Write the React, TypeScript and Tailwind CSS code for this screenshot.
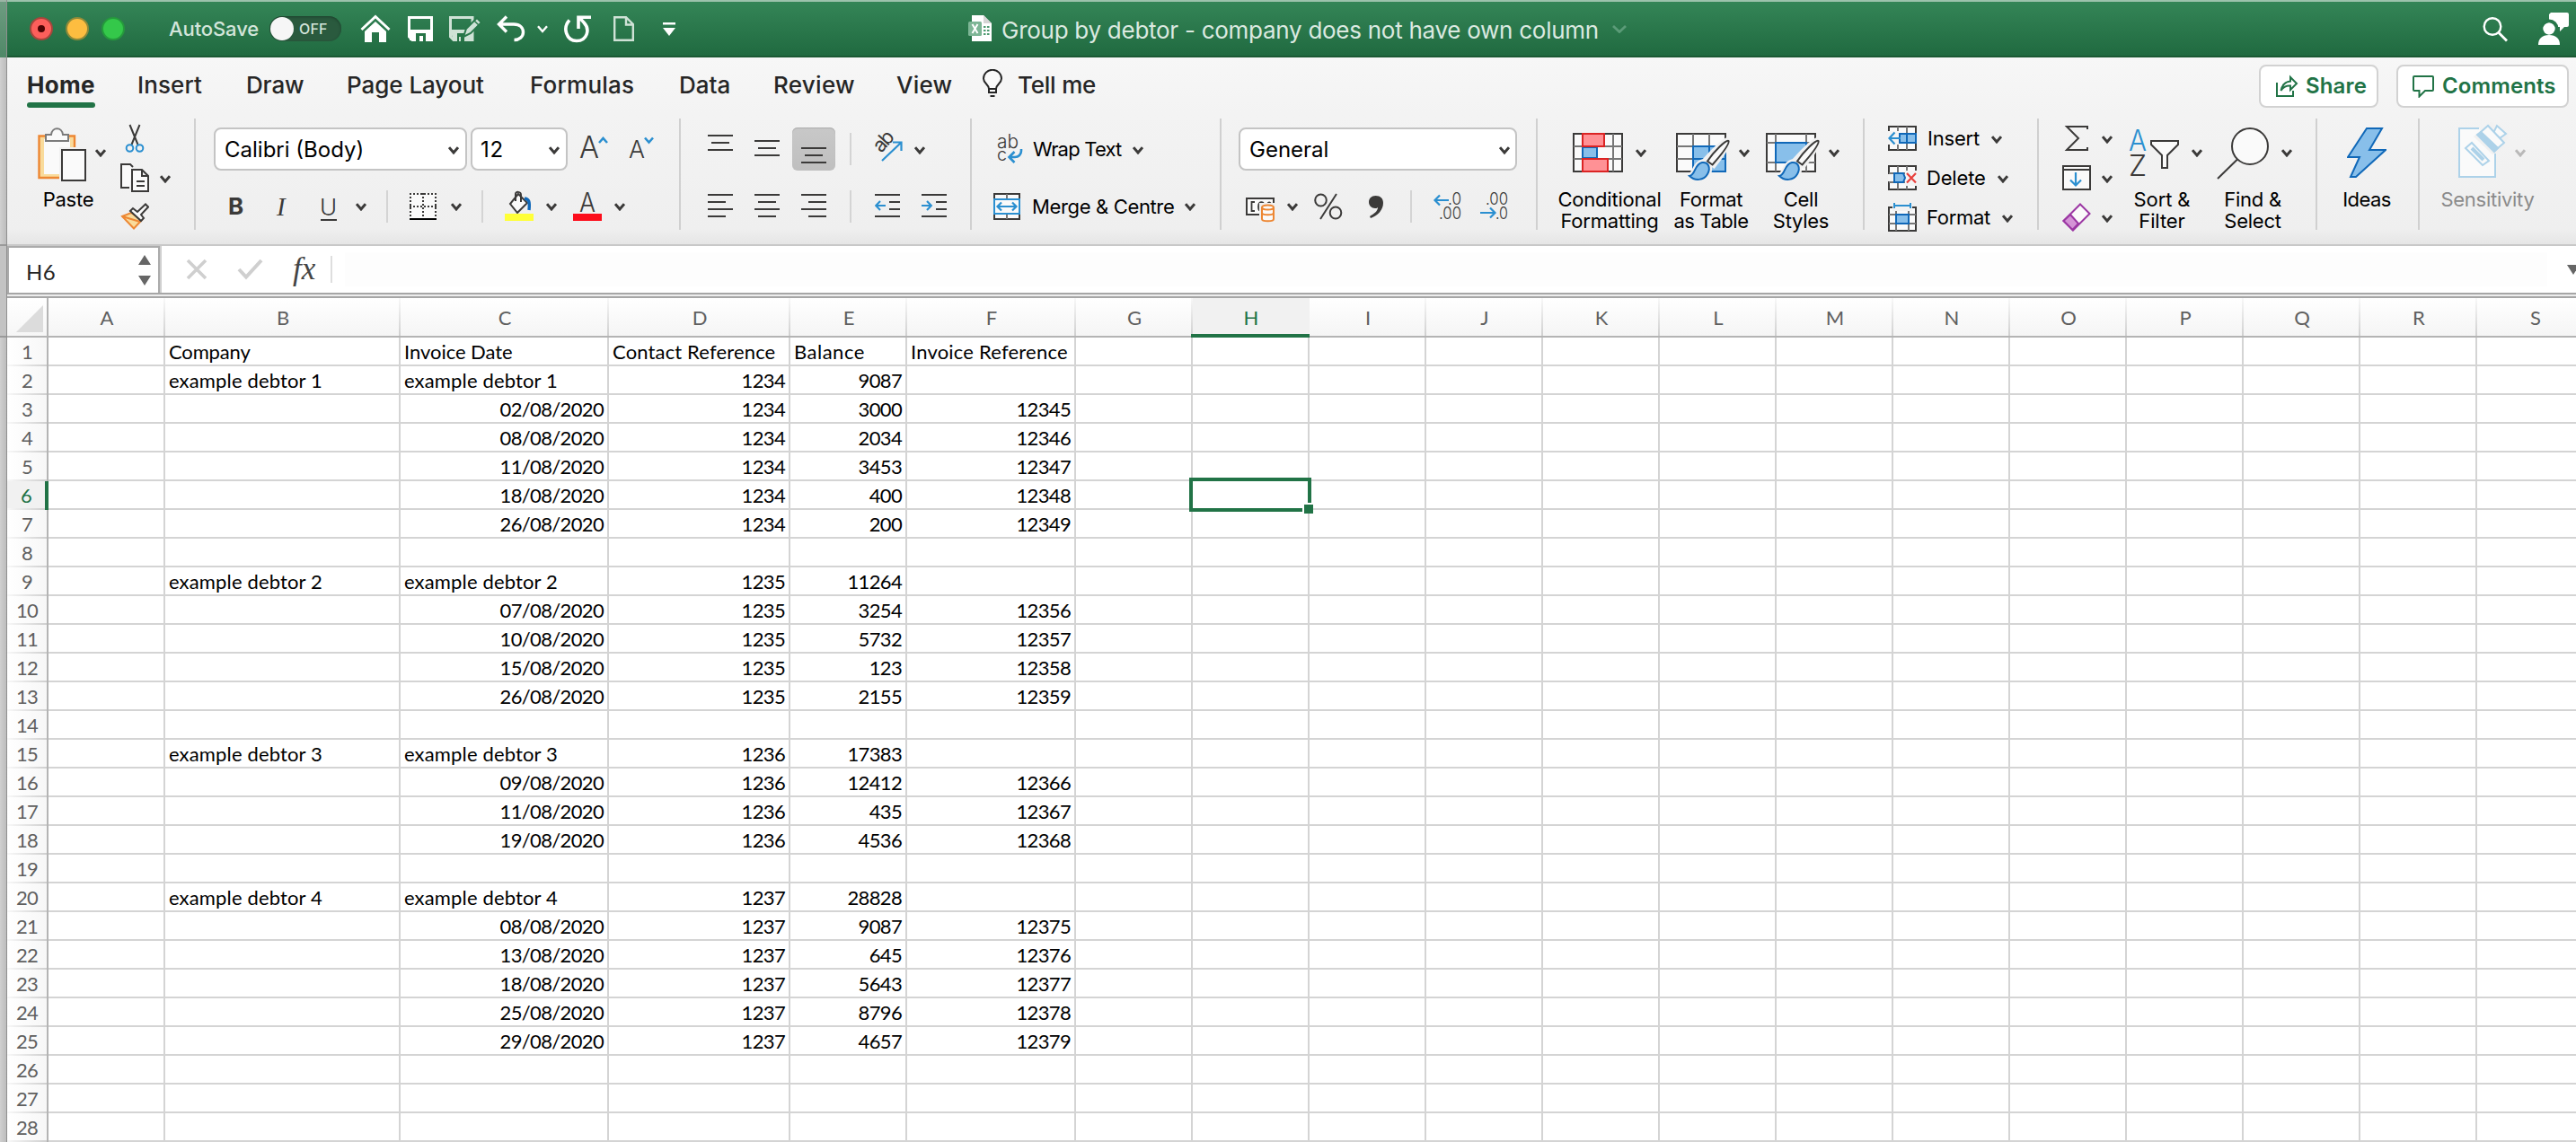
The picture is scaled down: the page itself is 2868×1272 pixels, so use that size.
import React from 'react';

const INK = '#3b3a39';
const BLUE = '#2b8fd0';
const DEEP = '#1068b8';
const SKY = '#88bfea';
const PAPER = '#fafafa';

function Chevron({ className = '' }: { className?: string }) {
  return (
    <svg className={`shrink-0 ${className}`} width="12" height="9" viewBox="0 0 12 9" fill="none" stroke={INK} strokeWidth="3">
      <path d="M1 1.2 6 7 11 1.2" />
    </svg>
  );
}

function Lines({ spec, className = '' }: { spec: [number, number, number][]; className?: string }) {
  return (
    <svg className={`shrink-0 ${className}`} width="28" height="48" viewBox="0 0 28 48" fill={INK}>
      {spec.map(([x, y, w], i) => (
        <rect key={i} x={x} y={y} width={w} height="2" />
      ))}
    </svg>
  );
}

function TitleBar() {
  return (
    <header className="flex h-16 items-center border-b-2 border-t-2 border-b-[#1b5934] border-t-[#9cc2ac] bg-linear-to-b from-[#348557] to-[#206a40] pl-[25px] pr-2 font-[Inter]">
      <div className="flex gap-[14px]">
        <span className="flex size-[26px] items-center justify-center rounded-full border-2 border-[#a5463c] bg-[#fc5f5b]">
          <span className="size-2 rounded-full bg-[#4c0404]" />
        </span>
        <span className="size-[26px] rounded-full border-2 border-[#8f8a3a] bg-[#fdbd40]" />
        <span className="size-[26px] rounded-full border-2 border-[#259a3c] bg-[#34c84a]" />
      </div>
      <span className="ml-[49px] w-[112px] text-[22px] font-medium tracking-[-0.1px] text-[#d3e5da]">AutoSave</span>
      <div className="flex h-7 w-20 items-center rounded-full bg-[#2a5a3e] shadow-[inset_0_1px_3px_#1c3f2b]">
        <span className="ml-px size-[26px] rounded-full bg-[#f6f6f6]" />
        <span className="ml-[6px] text-[16px] font-medium tracking-[0.2px] text-[#d3e5da]">OFF</span>
      </div>
      <svg className="ml-[21px]" width="34" height="32" viewBox="0 0 34 32" fill="#fff">
        <path d="M1.5 17 17 2.5 32.500 17" fill="none" stroke="#fff" strokeWidth="3" />
        <path d="M5 19 17 8 29 19V31H21V20H13V31H5Z" />
      </svg>
      <svg className="ml-[19px]" width="28" height="28" viewBox="0 0 28 28">
        <path d="M1.500 1.500H26.500V26.500H5L1.500 23Z" fill="none" stroke="#fff" strokeWidth="3" />
        <path d="M2 15H26V27H2Z" fill="#fff" />
        <path d="M9 19H20V28H17V22H13V28H9Z" fill="#277547" />
      </svg>
      <svg className="ml-[18px]" width="37" height="30" viewBox="0 0 37 30">
        <path d="M1.500 2.500H26V27.500H5L1.500 24Z" fill="none" stroke="#cfe2d6" strokeWidth="3" />
        <path d="M2 16H27V28H4Z" fill="#cfe2d6" />
        <path d="M9 20H17V29H13V24H11V29H9Z" fill="#277547" />
        <path d="M16 24 19 15 31 3 36 8 24 20Z" fill="#cfe2d6" stroke="#2a784b" strokeWidth="2" />
        <path d="M28 6 33 11" stroke="#2a784b" strokeWidth="1.500" />
      </svg>
      <svg className="ml-[16px]" width="32" height="30" viewBox="0 0 32 30" fill="none" stroke="#fff" strokeWidth="3.400">
        <path d="M11 1.500 2.500 10 11 18.500M3 10H19C26 10 29.500 14 29.500 19S25 27.500 19.500 27.500" />
      </svg>
      <svg className="ml-[13px]" width="12" height="9" viewBox="0 0 12 9" fill="none" stroke="#fff" strokeWidth="2.400">
        <path d="M1 1.200 6 7 11 1.200" />
      </svg>
      <svg className="ml-[17px]" width="32" height="32" viewBox="0 0 32 32" fill="none" stroke="#fff" strokeWidth="3.600">
        <path d="M7 6.500C-1 15 3.500 29.500 15 29.500S30.500 17 23 9C21 7 19.500 5 18 3.500M17 16V3.200H31" />
      </svg>
      <svg className="ml-[24px]" width="23" height="28" viewBox="0 0 23 28" fill="none" stroke="#cfe2d6" strokeWidth="2.400">
        <path d="M1.200 1.200H14L21.800 9V26.800H1.200ZM14 1.200V9.500H21.800" />
      </svg>
      <svg className="ml-[32px]" width="14" height="15" viewBox="0 0 14 15" fill="#fff">
        <path d="M0 0H14V2.500H0ZM0 6H14L7 15Z" />
      </svg>
      <svg className="ml-[326px]" width="27" height="30" viewBox="0 0 27 30">
        <path d="M4 0H17L26 9V29H4Z" fill="#fff" />
        <path d="M17 0V9H26Z" fill="#d6d6d6" />
        <rect x="0" y="7" width="15" height="16" rx="1.500" fill="#7db595" />
        <path d="M4.500 10 10.500 20M10.500 10 4.500 20" stroke="#fff" strokeWidth="2" />
        <path d="M17 12H19.500V14H17ZM21 12H23.500V14H21ZM17 16H19.500V18H17ZM21 16H23.500V18H21ZM17 20H19.500V22H17ZM21 20H23.500V22H21Z" fill="#4d9a70" />
      </svg>
      <h1 className="ml-[10px] w-[680px] whitespace-nowrap pt-[3px] text-[26px] font-normal tracking-[-0.27px] text-[#dbe9e0]">
        Group by debtor - company does not have own column
      </h1>
      <svg width="16" height="9" viewBox="0 0 16 9" fill="none" stroke="#5b9b78" strokeWidth="2.800">
        <path d="M1 1 8 7.500 15 1" />
      </svg>
      <svg className="ml-auto" width="29" height="29" viewBox="0 0 29 29" fill="none" stroke="#fff" strokeWidth="2.400">
        <circle cx="11" cy="11.500" r="9.300" />
        <path d="M18 18.500 27 27.500" strokeWidth="2.800" />
      </svg>
      <svg className="ml-[33px]" width="34" height="38" viewBox="0 0 34 38" fill="#fff">
        <path d="M14 1H32A2 2 0 0 1 34 3V15A2 2 0 0 1 32 17H29L24 22V17H12V3Z" />
        <circle cx="12" cy="19" r="8.500" stroke="#27774a" strokeWidth="4" />
        <circle cx="12" cy="19" r="6.500" />
        <path d="M0 37C0 30 4 26 12 26S24 30 24 37Z" />
      </svg>
    </header>
  );
}

const TABS: [string, string][] = [
  ['Home', 'w-[123px] font-bold tracking-[0.3px]'],
  ['Insert', 'w-[121px] font-medium tracking-[0.1px]'],
  ['Draw', 'w-[112px] font-medium tracking-[-0.16px]'],
  ['Page Layout', 'w-[204px] font-medium tracking-[-0.05px]'],
  ['Formulas', 'w-[166px] font-medium tracking-[0.21px]'],
  ['Data', 'w-[105px] font-medium'],
  ['Review', 'w-[137px] font-medium tracking-[0.28px]'],
  ['View', 'w-[92px] font-medium tracking-[0.2px]'],
];

function TabRow() {
  return (
    <nav className="flex h-16 items-start bg-linear-to-b from-[#f7f7f7] to-[#f3f3f3] pl-[22px] pr-2 pt-[15px] font-[Inter] text-[26px] leading-8 text-[#262626]">
      {TABS.map(([name, cls], i) => (
        <div key={name} className={cls}>
          <div>{name}</div>
          {i === 0 && <div className="mt-[3px] h-[6px] w-[76px] rounded-full bg-[#217346]" />}
        </div>
      ))}
      <svg className="ml-[3px] mt-[-2px]" width="24" height="32" viewBox="0 0 24 32" fill={PAPER} stroke="#262626" strokeWidth="2">
        <path d="M8 22C8 17 2 16 2 10.500A9.800 9.500 0 0 1 22 10.500C22 16 16 17 16 22V26H8Z" />
        <path d="M8 22H16M9.500 30H14.500" />
      </svg>
      <span className="ml-[16px] font-medium tracking-[-0.22px]">Tell me</span>
      <div className="ml-auto mt-[-7px] flex gap-5 text-[24px] font-semibold text-[#217346]">
        <div className="flex h-12 w-[133px] items-center rounded-lg border-2 border-[#d2d2d2] bg-white pl-4">
          <svg width="26" height="26" viewBox="0 0 26 26" fill="none" stroke="#217346" strokeWidth="2">
            <path d="M2 9V24H20V18" />
            <path d="M6.500 18C8 11 11 8 17 7.500V3L24 10 17 17V12.500C12 12 9 14 6.500 18Z" />
          </svg>
          <span className="ml-[8px] tracking-[0.15px]">Share</span>
        </div>
        <div className="flex h-12 w-[192px] items-center rounded-lg border-2 border-[#d2d2d2] bg-white pl-4">
          <svg width="24" height="26" viewBox="0 0 24 26" fill="none" stroke="#217346" strokeWidth="2">
            <path d="M2 2H22A1 1 0 0 1 23 3V17A1 1 0 0 1 22 18H14L7.500 24.500V18H2A1 1 0 0 1 1 17V3A1 1 0 0 1 2 2Z" />
          </svg>
          <span className="ml-[9px] tracking-[0.09px]">Comments</span>
        </div>
      </div>
    </nav>
  );
}

function Divider() {
  return <div className="h-[124px] w-[2px] shrink-0 bg-[#d0d0d0]" />;
}

function ShortDivider({ className = '' }: { className?: string }) {
  return <div className={`h-9 w-[2px] shrink-0 bg-[#d4d4d4] ${className}`} />;
}

function BigButton({ lines, className, labelClass = '', children }: { lines: string[]; className: string; labelClass?: string; children: React.ReactNode }) {
  return (
    <div className={`flex shrink-0 flex-col items-center pt-[10px] ${className}`}>
      <div className="flex h-[60px]">{children}</div>
      <div className={`mt-2 whitespace-nowrap text-center text-[22px] leading-6 ${labelClass}`}>
        {lines.map((l) => (
          <div key={l}>{l}</div>
        ))}
      </div>
    </div>
  );
}

function PaintBrush() {
  return (
    <g>
      <path d="M58 14C59 18 49 33 42 42L33 36C42 26 54 14 58 14Z" fill="#f1f1f1" stroke="#f1f1f1" strokeWidth="6" />
      <path d="M14 54C20 54 20 40 29 38 36 37 40 45 36 52 31 60 20 60 14 54Z" fill="#f1f1f1" stroke="#f1f1f1" strokeWidth="5" />
      <path d="M58.500 15C60 19 48 33 40.500 41.500L35 37.500C42 27 56 13 58.500 15Z" fill={PAPER} stroke={INK} strokeWidth="2" />
      <path d="M15 54C22 53 20 41 29 39 36 38 39 45 35 52 31 59 21 60 15 54Z" fill={SKY} stroke={DEEP} strokeWidth="2" />
    </g>
  );
}

function ClipboardGroup() {
  return (
    <div className="flex w-[208px] shrink-0">
      <BigButton lines={['Paste']} className="ml-[34px] w-[76px]" labelClass="pr-2 tracking-[-0.25px]">
        <svg width="55" height="60" viewBox="0 0 55 60">
          <path d="M1.500 9.500H41V56H1.500Z" fill="#f9db9b" stroke="#ed8733" strokeWidth="2.400" />
          <path d="M7 13H36V52H7Z" fill={PAPER} />
          <path d="M24 22H55V60H24Z" fill="#f1f1f1" />
          <path d="M9 8H15C16 -1 27 -1 28 8H34V15H9Z" fill={PAPER} stroke="#7b7b7b" strokeWidth="2" />
          <path d="M27 25H53V59H27Z" fill={PAPER} stroke={INK} strokeWidth="2" />
        </svg>
        <Chevron className="ml-[9px] mt-6" />
      </BigButton>
      <div className="ml-4 flex flex-col">
        <svg className="mt-[6px]" width="32" height="32" viewBox="0 0 32 32" fill="none" strokeWidth="2">
          <path d="M10.500 1 19.500 23M21.500 1 12.500 23" stroke={INK} />
          <circle cx="10.500" cy="27" r="3.800" stroke={BLUE} />
          <circle cx="21.500" cy="27" r="3.800" stroke={BLUE} />
        </svg>
        <div className="mt-3 flex items-start">
          <svg width="32" height="32" viewBox="0 0 32 32" fill={PAPER} stroke={INK} strokeWidth="2">
            <path d="M14 4 11 1H1V27H10" />
            <path d="M13 7H24L31 14V31H13ZM24 7V14H31M18 20H27M18 25H27" />
          </svg>
          <Chevron className="ml-3 mt-[13px]" />
        </div>
        <svg className="mt-3" width="32" height="30" viewBox="0 0 32 30" strokeWidth="2">
          <path d="M2 15 12 11 24 19 15 28.500Z" fill="#f9db9b" stroke="#ed8733" />
          <path d="M2 15 22 21" stroke="#ed8733" />
          <path d="M11 9 14 6 19 10 28 1.500 31 4.500 23 13 26 17 23 20Z" fill={PAPER} stroke={INK} />
        </svg>
      </div>
    </div>
  );
}

function SelectBox({ text, className }: { text: string; className: string }) {
  return (
    <div className={`flex h-12 shrink-0 items-center justify-between rounded-lg border-2 border-[#c4c4c4] bg-white text-[24px] ${className}`}>
      <span className="pt-[2px]">{text}</span>
      <Chevron className="mt-[2px]" />
    </div>
  );
}

function FontGroup() {
  return (
    <div className="flex w-[538px] shrink-0 flex-col gap-4 pt-[10px]">
      <div className="flex h-12 items-center pl-5">
        <SelectBox text="Calibri (Body)" className="w-[282px] pl-[10px] pr-[7px]" />
        <SelectBox text="12" className="ml-1 w-[108px] pl-[9px] pr-[7px] tracking-[0.8px]" />
        <svg className="ml-[12px] overflow-visible" width="34" height="48" viewBox="0 0 34 48">
          <text x="1" y="34" fontFamily="Inter" fontWeight="300" fontSize="34" textLength="22" lengthAdjust="spacingAndGlyphs" fill={INK}>A</text>
          <path d="M23 17 27.500 12 32 17" fill="none" stroke={BLUE} strokeWidth="2.600" />
        </svg>
        <svg className="ml-[21px] overflow-visible" width="34" height="48" viewBox="0 0 34 48">
          <text x="1" y="34" fontFamily="Inter" fontWeight="300" fontSize="27" textLength="18" lengthAdjust="spacingAndGlyphs" fill={INK}>A</text>
          <path d="M19 11.500 23.500 16.500 28 11.500" fill="none" stroke={BLUE} strokeWidth="2.600" />
        </svg>
      </div>
      <div className="flex h-12 items-center text-[26px] leading-8 text-[#3b3a39]">
        <span className="ml-[36px] w-[54px] font-bold">B</span>
        <span className="w-[48px] font-['Liberation_Serif'] text-[29px] italic">I</span>
        <span className="flex flex-col items-center font-light">
          <span className="h-[29px]">U</span>
          <span className="h-[2px] w-[18px] bg-[#3b3a39]" />
        </span>
        <Chevron className="ml-[21px]" />
        <ShortDivider className="ml-[22px]" />
        <svg className="ml-6" width="30" height="30" viewBox="0 0 30 30" stroke={INK} strokeWidth="2">
          <rect x="0" y="0" width="30" height="30" fill={PAPER} stroke="none" />
          <path d="M0 1H30M0 15H30M1 0V28M15 0V28M29 0V28" strokeDasharray="2 2" />
          <path d="M0 29H30" stroke="#000" />
        </svg>
        <Chevron className="ml-4" />
        <ShortDivider className="ml-[22px]" />
        <svg className="ml-6" width="32" height="48" viewBox="0 0 32 48">
          <path d="M15 10 6 21 14 31 25 20Z" fill={PAPER} stroke={INK} strokeWidth="2" />
          <path d="M12 18V10C12 7 18 7 18 11V19" fill="none" stroke={INK} strokeWidth="2" />
          <path d="M22 15C27 16 28 18 27 28" fill="none" stroke={DEEP} strokeWidth="3.400" />
          <rect x="0" y="32" width="32" height="8" fill="#ffff38" />
        </svg>
        <Chevron className="ml-[14px]" />
        <svg className="ml-[18px] overflow-visible" width="32" height="48" viewBox="0 0 32 48">
          <text x="7" y="30" fontFamily="Inter" fontWeight="300" fontSize="30" textLength="18" lengthAdjust="spacingAndGlyphs" fill={INK}>A</text>
          <rect x="0" y="32" width="32" height="8" fill="#fc0d1b" />
        </svg>
        <Chevron className="ml-[14px]" />
      </div>
    </div>
  );
}

function AlignGroup() {
  return (
    <div className="flex w-[322px] shrink-0 flex-col gap-4 pt-[10px]">
      <div className="flex h-12 items-center">
        <Lines className="ml-[30px]" spec={[[0, 8, 28], [4, 16, 20], [0, 24, 28]]} />
        <Lines className="ml-6" spec={[[0, 14, 28], [4, 22, 20], [0, 30, 28]]} />
        <div className="ml-[14px] flex h-12 w-12 items-center justify-center rounded-md bg-linear-to-b from-[#c8c8c8] to-[#bfbfbf] shadow-[inset_0_1px_1px_#ababab]">
          <Lines spec={[[0, 22, 28], [4, 30, 20], [0, 38, 28]]} />
        </div>
        <ShortDivider className="ml-4" />
        <svg className="ml-[22px] overflow-visible" width="36" height="48" viewBox="0 0 36 48">
          <text x="0" y="0" transform="translate(11 29) rotate(-48)" fontFamily="Inter" fontSize="22" textLength="24" fill={INK}>ab</text>
          <path d="M12 37 33 17M24 16.500H33.500V26" fill="none" stroke={BLUE} strokeWidth="2.200" />
        </svg>
        <Chevron className="ml-[12px] mt-[2px]" />
      </div>
      <div className="flex h-12 items-center">
        <Lines className="ml-[30px]" spec={[[0, 10, 28], [0, 18, 20], [0, 26, 28], [0, 34, 20]]} />
        <Lines className="ml-6" spec={[[0, 10, 28], [4, 18, 20], [0, 26, 28], [4, 34, 20]]} />
        <Lines className="ml-6" spec={[[0, 10, 28], [8, 18, 20], [0, 26, 28], [8, 34, 20]]} />
        <ShortDivider className="ml-[26px]" />
        <svg className="ml-[26px]" width="28" height="48" viewBox="0 0 28 48">
          <path d="M0 11H28M16 19H28M16 27H28M0 35H28" stroke={INK} strokeWidth="2" />
          <path d="M12 23H1.500M6 18 1.200 23 6 28" fill="none" stroke={BLUE} strokeWidth="2.200" />
        </svg>
        <svg className="ml-6" width="28" height="48" viewBox="0 0 28 48">
          <path d="M0 11H28M16 19H28M16 27H28M0 35H28" stroke={INK} strokeWidth="2" />
          <path d="M0 23H10.500M6 18 10.800 23 6 28" fill="none" stroke={BLUE} strokeWidth="2.200" />
        </svg>
      </div>
    </div>
  );
}

function WrapGroup() {
  return (
    <div className="flex w-[276px] shrink-0 flex-col gap-4 whitespace-nowrap pt-[10px] text-[22px]">
      <div className="flex h-12 items-center pl-6">
        <svg className="overflow-visible" width="34" height="48" viewBox="0 0 34 48">
          <text x="4" y="23" fontFamily="Inter" fontWeight="300" fontSize="21" textLength="24" lengthAdjust="spacingAndGlyphs" fill={INK}>ab</text>
          <text x="4" y="37" fontFamily="Inter" fontWeight="300" fontSize="20" textLength="11" lengthAdjust="spacingAndGlyphs" fill={INK}>c</text>
          <path d="M31 24V26C31 30 28 33 24 33H18M23.500 27 17.500 33 23.500 39" fill="none" stroke={BLUE} strokeWidth="2.600" />
        </svg>
        <span className="ml-[10px] w-[102px] tracking-[-0.8px]">Wrap Text</span>
        <Chevron className="ml-[9px] mt-[2px]" />
      </div>
      <div className="flex h-12 items-center pl-6">
        <svg width="30" height="30" viewBox="0 0 30 30" strokeWidth="2">
          <path d="M1 1H29V29H1Z" fill={PAPER} stroke={INK} />
          <path d="M15 1V29" stroke="#777" />
          <path d="M1 7H29V23H1Z" fill={PAPER} stroke={BLUE} />
          <path d="M5 15H25M9 10.500 4.500 15 9 19.500M21 10.500 25.500 15 21 19.500" fill="none" stroke={BLUE} strokeWidth="2.200" />
        </svg>
        <span className="ml-[13px] tracking-[-0.35px]">Merge &amp; Centre</span>
        <Chevron className="ml-[12px]" />
      </div>
    </div>
  );
}

function NumberGroup() {
  return (
    <div className="flex w-[350px] shrink-0 flex-col gap-4 pt-[10px]">
      <div className="flex h-12 items-center pl-[19px]">
        <SelectBox text="General" className="w-[310px] pl-[10px] pr-[6px]" />
      </div>
      <div className="flex h-12 items-center pl-[26px]">
        <svg width="34" height="48" viewBox="0 0 34 48">
          <path d="M2 15H32V33H2Z" fill={PAPER} stroke={INK} strokeWidth="2" />
          <path d="M11 19H7.500V29H11M21 20C17 18 15 20 15 24S16 29 18 29M25 21C27 18 29 20 29 22" fill="none" stroke={INK} strokeWidth="1.800" />
          <path d="M16 20H34V42H16Z" fill="#f0f0f0" />
          <path d="M19 25V38C19 41 32 41 32 38V25" fill={PAPER} stroke="#ed8733" strokeWidth="2" />
          <path d="M19 31C19 34 32 34 32 31" fill="none" stroke="#ed8733" strokeWidth="2" />
          <ellipse cx="25.500" cy="25" rx="6.500" ry="2.600" fill={PAPER} stroke="#ed8733" strokeWidth="2" />
        </svg>
        <Chevron className="ml-[13px]" />
        <svg className="ml-[18px]" width="32" height="48" viewBox="0 0 32 48" fill="none" stroke={INK} strokeWidth="2">
          <ellipse cx="7.500" cy="17" rx="6.300" ry="6.500" />
          <ellipse cx="24" cy="31" rx="6.300" ry="6.500" />
          <path d="M25 10 7 38" />
        </svg>
        <svg className="ml-[29px]" width="16" height="48" viewBox="0 0 16 48" fill={INK}>
          <path d="M7.500 12C13 12 16 15 16 20 16 28 10 34 2 37L1 35C6 32 10 29 10 25 9 26 8 26 7 26 3 26 0 23 0 19S3 12 7.500 12Z" />
        </svg>
        <ShortDivider className="ml-[30px]" />
        <svg className="ml-6 overflow-visible" width="32" height="48" viewBox="0 0 32 48" fontFamily="Inter" fontWeight="300" fontSize="19" fill={INK}>
          <text x="16" y="22" textLength="15" lengthAdjust="spacingAndGlyphs">.0</text>
          <text x="6" y="38" textLength="25" lengthAdjust="spacingAndGlyphs">.00</text>
          <path d="M17 17H1.500M7 11.500 1.500 17 7 22.500" fill="none" stroke={BLUE} strokeWidth="2.200" />
        </svg>
        <svg className="ml-5 overflow-visible" width="32" height="48" viewBox="0 0 32 48" fontFamily="Inter" fontWeight="300" fontSize="19" fill={INK}>
          <text x="6" y="22" textLength="25" lengthAdjust="spacingAndGlyphs">.00</text>
          <text x="17" y="38" textLength="14" lengthAdjust="spacingAndGlyphs">.0</text>
          <path d="M0 31H16.500M11 25.500 16.500 31 11 36.500" fill="none" stroke={BLUE} strokeWidth="2.200" />
        </svg>
      </div>
    </div>
  );
}

function StylesGroup() {
  return (
    <div className="flex w-[362px] shrink-0">
      <BigButton lines={['Conditional', 'Formatting']} className="ml-[23px] w-[114px]" labelClass="tracking-[-0.2px]">
        <svg width="56" height="60" viewBox="0 0 56 60" strokeWidth="2">
          <path d="M1 7H55V49H1Z" fill={PAPER} stroke={INK} />
          <path d="M11 7V49M45 7V49M1 21H55M1 35H55" stroke="#777" />
          <path d="M11 22H27V34H11Z" fill={SKY} stroke={DEEP} />
          <path d="M28 22H36V34H28Z" fill={PAPER} stroke="none" />
          <path d="M11 7H35V21H11ZM11 35H39V49H11Z" fill="#ff9195" stroke="#db2424" />
        </svg>
        <Chevron className="ml-[14px] mt-6" />
      </BigButton>
      <BigButton lines={['Format', 'as Table']} className="ml-[17px] w-[82px]" labelClass="pr-1 tracking-[-0.45px]">
        <svg width="60" height="60" viewBox="0 0 60 60" strokeWidth="2">
          <path d="M1 7H55V49H1Z" fill={PAPER} stroke={INK} />
          <path d="M19 7V49M37 7V21M1 21H55M1 35H19" stroke="#777" />
          <path d="M19 21H55V49H19Z" fill={SKY} stroke={DEEP} />
          <path d="M37 21V49M19 35H55" stroke={DEEP} />
          <PaintBrush />
        </svg>
        <Chevron className="ml-[10px] mt-6" />
      </BigButton>
      <BigButton lines={['Cell', 'Styles']} className="ml-[18px] w-[82px]" labelClass="pr-1 tracking-[-0.27px]">
        <svg width="60" height="60" viewBox="0 0 60 60" strokeWidth="2">
          <path d="M1 7H55V49H1Z" fill={PAPER} stroke={INK} />
          <path d="M11 7V49M45 7V49M1 17H55M1 39H55" stroke="#777" />
          <path d="M11 17H45V39H11Z" fill={SKY} stroke={DEEP} />
          <PaintBrush />
        </svg>
        <Chevron className="ml-[10px] mt-6" />
      </BigButton>
    </div>
  );
}

function CellsGroup() {
  return (
    <div className="flex w-[192px] shrink-0 flex-col pl-[26px] text-[22px]">
      <div className="flex h-11 items-center">
        <svg width="32" height="28" viewBox="0 0 32 28" strokeWidth="2">
          <path d="M1 1H31V27H1Z" fill={PAPER} stroke={INK} />
          <path d="M11 1V27M21 1V27M1 9H31M1 19H31" stroke="#777" />
          <path d="M0 6H12V21H0Z" fill="#f4f4f4" />
          <path d="M13 9H31V19H13ZM21 9V19" fill={SKY} stroke={DEEP} />
          <path d="M14 14H1.500M7.500 7.500 1.500 14 7.500 20.500" fill="none" stroke={BLUE} strokeWidth="2.200" />
        </svg>
        <span className="ml-3 tracking-[-0.19px]">Insert</span>
        <Chevron className="ml-[13px] mt-[2px]" />
      </div>
      <div className="flex h-11 items-center">
        <svg width="32" height="28" viewBox="0 0 32 28" strokeWidth="2">
          <path d="M1 1H31V27H1Z" fill={PAPER} stroke={INK} />
          <path d="M11 1V27M21 1V27M1 9H31M1 19H31" stroke="#777" />
          <path d="M0 10H5V18H0ZM19 6H32V23H19Z" fill="#f4f4f4" />
          <path d="M7 9H17L19 14 17 19H7Z" fill={SKY} stroke={DEEP} />
          <path d="M21 9 31 19.500M31 9 21 19.500" stroke="#e8403c" strokeWidth="2.200" />
        </svg>
        <span className="ml-[11px] tracking-[-0.17px]">Delete</span>
        <Chevron className="ml-[13px] mt-[2px]" />
      </div>
      <div className="flex h-11 items-center">
        <svg width="32" height="32" viewBox="0 0 32 32" strokeWidth="2">
          <path d="M1 5H31V31H1Z" fill={PAPER} stroke={INK} />
          <path d="M9 8V31M23 8V31M1 13H31M1 23H31" stroke="#777" />
          <path d="M5 0H27V9H5Z" fill="#f2f2f2" />
          <path d="M9 13H23V23H9Z" fill={SKY} stroke={DEEP} />
          <path d="M7 3H25M7 0V6M25 0V6" stroke={BLUE} />
        </svg>
        <span className="ml-[11px] tracking-[-0.31px]">Format</span>
        <Chevron className="ml-[13px] mt-[2px]" />
      </div>
    </div>
  );
}

function EditingGroup() {
  return (
    <div className="flex w-[308px] shrink-0">
      <div className="ml-[26px] flex w-14 flex-col">
        <div className="flex h-11 items-center">
          <svg width="32" height="28" viewBox="0 0 32 28" fill="none" stroke={INK} strokeWidth="2">
            <path d="M28 4V1H5L18 14 5 27H28V24" />
          </svg>
          <Chevron className="ml-3 mt-[2px]" />
        </div>
        <div className="flex h-11 items-center">
          <svg width="32" height="28" viewBox="0 0 32 28" fill={PAPER} stroke={INK} strokeWidth="2">
            <path d="M1 1H31V27H1ZM1 5H31" />
            <path d="M15 8V22M9 16.500 15 22.500 21 16.500" fill="none" stroke={BLUE} strokeWidth="2.200" />
          </svg>
          <Chevron className="ml-3 mt-[2px]" />
        </div>
        <div className="flex h-11 items-center">
          <svg width="32" height="32" viewBox="0 0 32 32" strokeWidth="2" stroke="#9b36a3">
            <path d="M20 1.500 30.500 12 12 30.500 1.500 20Z" fill={PAPER} />
            <path d="M9 13 18 23 11.500 30 1.500 20Z" fill="#d493d6" />
          </svg>
          <Chevron className="ml-3 mt-[2px]" />
        </div>
      </div>
      <BigButton lines={['Sort &', 'Filter']} className="ml-[18px] w-[82px]" labelClass="pr-2 tracking-[-0.1px]">
        <svg className="overflow-visible" width="58" height="60" viewBox="0 0 58 60" fontFamily="Inter" fontWeight="300">
          <text x="0" y="26" fontSize="33" textLength="20" lengthAdjust="spacingAndGlyphs" fill={BLUE}>A</text>
          <text x="0" y="54" fontSize="33" textLength="20" lengthAdjust="spacingAndGlyphs" fill={INK}>Z</text>
          <path d="M25 15H55V19L43 31V45H37V31L25 19Z" fill={PAPER} stroke={INK} strokeWidth="2" />
        </svg>
        <Chevron className="ml-[12px] mt-6" />
      </BigButton>
      <BigButton lines={['Find &', 'Select']} className="ml-[16px] w-[84px]" labelClass="pr-1 tracking-[-0.24px]">
        <svg width="60" height="60" viewBox="0 0 60 60" fill={PAPER} stroke={INK} strokeWidth="2">
          <circle cx="37" cy="21" r="20" />
          <path d="M23 35.500 1 57" />
        </svg>
        <Chevron className="ml-[12px] mt-6" />
      </BigButton>
    </div>
  );
}

function Ribbon() {
  return (
    <div className="flex h-[146px] border-b-2 border-[#c8c8c8] bg-linear-to-b from-[#f3f3f3] via-[#efefef] via-88% to-[#e6e6e6] pt-1 font-[Inter] text-black">
      <ClipboardGroup />
      <Divider />
      <FontGroup />
      <Divider />
      <AlignGroup />
      <Divider />
      <WrapGroup />
      <Divider />
      <NumberGroup />
      <Divider />
      <StylesGroup />
      <Divider />
      <CellsGroup />
      <Divider />
      <EditingGroup />
      <Divider />
      <div className="flex w-[112px] shrink-0 justify-center pr-[2px]">
        <BigButton lines={['Ideas']} className="w-[60px]" labelClass="tracking-[-0.6px]">
          <svg width="44" height="60" viewBox="0 0 44 60" fill={SKY} stroke={DEEP} strokeWidth="2">
            <path d="M22 1H39L25 25H43L10 55H4L14 33H1Z" />
          </svg>
        </BigButton>
      </div>
      <Divider />
      <BigButton lines={['Sensitivity']} className="ml-[24px] w-[112px]" labelClass="pr-[9px] text-[#8b8b8b] tracking-[-0.27px]">
        <svg className="overflow-visible" width="54" height="60" viewBox="0 0 54 60" fill={PAPER} stroke="#add2e9" strokeWidth="2">
          <path d="M23 1H1V55H41V29" />
          <path d="M17 10 37 -6 56 8 48 26 38 30Z" fill="#f1f1f1" stroke="none" />
          <path d="M39 6 43 -2 53 7 46 12Z" />
          <path d="M25 5 33 -2 51 17 44 23Z" />
          <path d="M21 8 25 5 44 23 40 27Z" fill="#add2e9" />
          <path d="M15 17 34 37 27 42 8 23Z" />
          <path d="M15 23 28 36" strokeWidth="4" />
        </svg>
        <Chevron className="ml-[9px] mt-6 opacity-30" />
      </BigButton>
    </div>
  );
}

function FormulaBar() {
  return (
    <div className="flex h-[58px] flex-col bg-white">
      <div className="flex h-[52px]">
        <div className="flex w-[170px] shrink-0 items-center border-2 border-b-0 border-[#ababab] pl-[19px]">
          <span className="w-[125px] pt-[3px] font-[Lato] text-[24px] tracking-[0.5px] text-[#262626]">H6</span>
          <svg width="14" height="34" viewBox="0 0 14 34" fill="#666">
            <path d="M0 11H14L7 0ZM0 23H14L7 34Z" />
          </svg>
        </div>
        <div className="flex w-full items-center border-l-2 border-[#d0d0d0]">
          <svg className="ml-[27px]" width="24" height="24" viewBox="0 0 24 24" stroke="#cfcfcf" strokeWidth="3.600">
            <path d="M2 2 22 22M22 2 2 22" />
          </svg>
          <svg className="ml-[33px]" width="30" height="24" viewBox="0 0 30 24" fill="none" stroke="#cfcfcf" strokeWidth="4">
            <path d="M2 12 10 20.500 27 2" />
          </svg>
          <span className="ml-[32px] w-[42px] font-['Liberation_Serif'] text-[35px] italic leading-9 text-[#444]">fx</span>
          <div className="h-[30px] w-[2px] bg-[#dedede]" />
          <div className="ml-[14px] h-[38px] flex-1 bg-[#fdfdfd]" />
          <svg className="ml-[22px] shrink-0" width="10" height="11" viewBox="0 0 10 11" fill="#666">
            <path d="M0 0H14L7 11Z" />
          </svg>
        </div>
      </div>
      <div className="h-[6px] border-b-2 border-t-2 border-b-[#a6a6a6] border-t-[#a6a6a6] bg-[#ececec]" />
    </div>
  );
}

const COLUMNS: [string, string][] = [
  ['A', 'w-[130px]'],
  ['B', 'w-[262px]'],
  ['C', 'w-[232px]'],
  ['D', 'w-[202px]'],
  ['E', 'w-[130px]'],
  ['F', 'w-[188px]'],
  ...'GHIJKLMNOPQRS'.split('').map((l): [string, string] => [l, 'w-[130px]']),
];

const ROWS: Record<number, string[]> = {
  1: ['', 'Company', 'Invoice Date', 'Contact Reference', 'Balance', 'Invoice Reference'],
  2: ['', 'example debtor 1', 'example debtor 1', '1234', '9087', ''],
  3: ['', '', '02/08/2020', '1234', '3000', '12345'],
  4: ['', '', '08/08/2020', '1234', '2034', '12346'],
  5: ['', '', '11/08/2020', '1234', '3453', '12347'],
  6: ['', '', '18/08/2020', '1234', '400', '12348'],
  7: ['', '', '26/08/2020', '1234', '200', '12349'],
  9: ['', 'example debtor 2', 'example debtor 2', '1235', '11264', ''],
  10: ['', '', '07/08/2020', '1235', '3254', '12356'],
  11: ['', '', '10/08/2020', '1235', '5732', '12357'],
  12: ['', '', '15/08/2020', '1235', '123', '12358'],
  13: ['', '', '26/08/2020', '1235', '2155', '12359'],
  15: ['', 'example debtor 3', 'example debtor 3', '1236', '17383', ''],
  16: ['', '', '09/08/2020', '1236', '12412', '12366'],
  17: ['', '', '11/08/2020', '1236', '435', '12367'],
  18: ['', '', '19/08/2020', '1236', '4536', '12368'],
  20: ['', 'example debtor 4', 'example debtor 4', '1237', '28828', ''],
  21: ['', '', '08/08/2020', '1237', '9087', '12375'],
  22: ['', '', '13/08/2020', '1237', '645', '12376'],
  23: ['', '', '18/08/2020', '1237', '5643', '12377'],
  24: ['', '', '25/08/2020', '1237', '8796', '12378'],
  25: ['', '', '29/08/2020', '1237', '4657', '12379'],
};

const TEXT_TRACKING: Record<string, string> = {
  Company: 'tracking-[-0.15px]',
  Balance: 'tracking-[0.5px]',
  'Invoice Date': 'tracking-[-0.04px]',
  'Invoice Reference': 'tracking-[0.2px]',
};

function Cell({ value, width, selected }: { value: string; width: string; selected: boolean }) {
  const numeric = /^[\d/]+$/.test(value);
  return (
    <div
      className={`relative h-8 shrink-0 whitespace-nowrap border-b-2 border-r-2 border-[#d4d4d4] text-[22px] leading-[31px] text-black ${width} ${
        numeric ? 'pr-1 text-right tracking-[-0.65px]' : `pl-1 ${TEXT_TRACKING[value] ?? 'tracking-[0.15px]'}`
      }`}
    >
      {value}
      {selected && (
        <>
          <div className="absolute -inset-1 z-10 border-4 border-[#217346]" />
          <div className="absolute -bottom-[6px] -right-[6px] z-20 size-3 border-l-2 border-t-2 border-white bg-[#217346]" />
        </>
      )}
    </div>
  );
}

function Sheet() {
  return (
    <div className="overflow-hidden bg-white font-[Lato]">
      <div className="flex h-11 text-center text-[22px] leading-[43px] text-[#5f5f5f]">
        <div className="flex w-[46px] shrink-0 items-start border-b-2 border-r-2 border-[#b4b4b4] bg-linear-to-b from-white to-[#f6f6f6] pl-[10px] pt-2">
          <svg width="30" height="30" viewBox="0 0 30 30" fill="#dcdcdc">
            <path d="M30 0V30H0Z" />
          </svg>
        </div>
        {COLUMNS.map(([name, width]) =>
          name === 'H' ? (
            <div key={name} className={`relative shrink-0 bg-[#f1f1f1] text-[#217346] ${width}`}>
              {name}
              <div className="absolute -left-[2px] bottom-0 right-0 h-1 bg-[#217346]" />
            </div>
          ) : (
            <div key={name} className={`flex shrink-0 border-b-2 border-[#b4b4b4] bg-linear-to-b from-white to-[#f5f5f5] ${width}`}>
              <span className="flex-1 pl-[2px]">{name}</span>
              <span className="w-[2px] bg-linear-to-b from-[#f8f8f8] to-[#d0d0d0]" />
            </div>
          ),
        )}
      </div>
      {Array.from({ length: 28 }, (_, i) => i + 1).map((row) => (
        <div key={row} className="flex h-8">
          <div
            className={`flex w-[46px] shrink-0 flex-col text-center text-[22px] leading-[31px] tracking-[-0.65px] ${
              row === 6 ? 'border-r-4 border-[#217346] bg-[#f1f1f1] text-[#217346]' : 'border-r-2 border-[#b4b4b4] bg-linear-to-r from-white to-[#f7f7f7] text-[#5f5f5f]'
            }`}
          >
            <span className="h-[30px]">{row}</span>
            <span className="h-[2px] bg-linear-to-r from-[#f8f8f8] to-[#cfcfcf]" />
          </div>
          {COLUMNS.map(([name, width], c) => (
            <Cell key={name} value={ROWS[row]?.[c] ?? ''} width={width} selected={row === 6 && name === 'H'} />
          ))}
        </div>
      ))}
    </div>
  );
}

export default function App() {
  return (
    <div className="flex h-[1272px] w-[2868px] overflow-hidden bg-white">
      <div className="flex w-2 shrink-0 flex-col border-r border-[#8f8f8f] bg-linear-to-r from-[#d0d0d0] to-[#bdbdbd]">
        <div className="h-16 border-t-2 border-[#9cb5a6] bg-linear-to-b from-[#6d9c81] to-[#4f8867]" />
        <div className="mt-[208px] h-[104px] border-y-2 border-[#9a9a9a] bg-[#c3c3c3]" />
      </div>
      <main className="flex w-[2860px] flex-col">
        <TitleBar />
        <TabRow />
        <Ribbon />
        <FormulaBar />
        <Sheet />
      </main>
    </div>
  );
}
